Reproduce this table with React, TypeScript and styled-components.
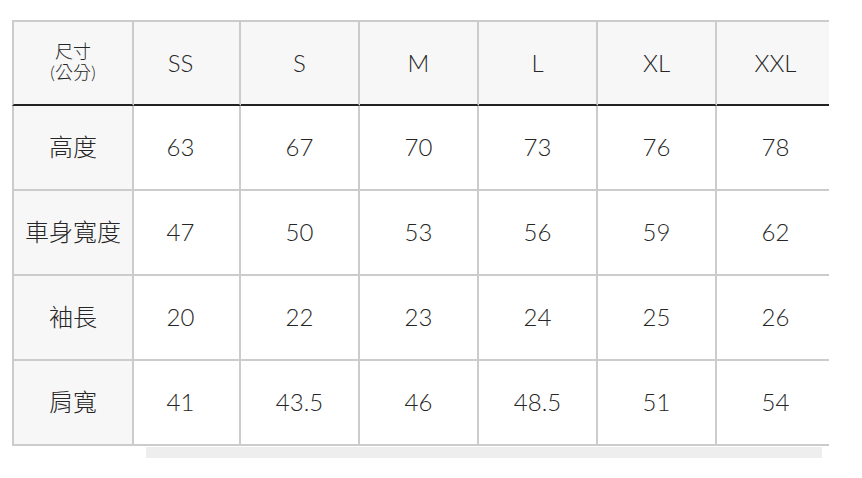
import React, { useLayoutEffect, useRef } from "react";
import styled, { createGlobalStyle } from "styled-components";

const GlobalStyle = createGlobalStyle`
  html, body { margin: 0; padding: 0; background: #ffffff; }
  body { font-family: Lato, "Noto Sans CJK TC", sans-serif; color: #333333; }
`;

const Page = styled.div`
  padding: 20px 0 0 12px;
`;

const ScrollArea = styled.div`
  width: 817px;
  overflow-x: auto;
  scrollbar-width: none;
  &::-webkit-scrollbar { display: none; }
`;

const Grid = styled.div`
  display: grid;
  grid-template-columns: 122px repeat(6, 119px);
  grid-template-rows: 86px repeat(4, 85px);
  width: 836px;
`;

const Cell = styled.div<{ $head?: boolean; $label?: boolean }>`
  box-sizing: border-box;
  display: flex;
  align-items: center;
  justify-content: center;
  text-align: center;
  font-size: 24px;
  line-height: 1.2;
  font-weight: 300;
  color: #262626;
  background: ${(p) => (p.$head || p.$label ? "#f7f7f7" : "#ffffff")};
  border-right: 2px solid #cccccc;
  border-bottom: 2px solid ${(p) => (p.$head ? "#222222" : "#cccccc")};
  border-top: ${(p) => (p.$head ? "2px solid #cccccc" : "none")};
  border-left: ${(p) => (p.$label ? "2px solid #cccccc" : "none")};
  ${(p) => (p.$label ? "position: sticky; left: 0; z-index: 1;" : "")}
`;

const UnitLabel = styled.span`
  display: flex;
  flex-direction: column;
  align-items: center;
  font-size: 18px;
  line-height: 21px;
  margin-top: -2px;
`;

const Track = styled.div`
  width: 817px;
  height: 11px;
  margin-top: 1px;
`;

const Thumb = styled.div`
  margin-left: 134px;
  width: 676px;
  height: 11px;
  background: #eeeeee;
`;

const sizes = ["SS", "S", "M", "L", "XL", "XXL"];
const rows: { label: string; values: string[] }[] = [
  { label: "高度", values: ["63", "67", "70", "73", "76", "78"] },
  { label: "車身寬度", values: ["47", "50", "53", "56", "59", "62"] },
  { label: "袖長", values: ["20", "22", "23", "24", "25", "26"] },
  { label: "肩寬", values: ["41", "43.5", "46", "48.5", "51", "54"] },
];

export default function App() {
  const ref = useRef<HTMLDivElement>(null);
  useLayoutEffect(() => {
    if (ref.current) ref.current.scrollLeft = 12;
  }, []);
  return (
    <Page>
      <GlobalStyle />
      <ScrollArea ref={ref}>
        <Grid>
          <Cell $head $label>
            <UnitLabel>
              <span>尺寸</span>
              <span>(公分)</span>
            </UnitLabel>
          </Cell>
          {sizes.map((s) => (
            <Cell key={s} $head>
              {s}
            </Cell>
          ))}
          {rows.map((r) => (
            <React.Fragment key={r.label}>
              <Cell $label>{r.label}</Cell>
              {r.values.map((v, i) => (
                <Cell key={i}>{v}</Cell>
              ))}
            </React.Fragment>
          ))}
        </Grid>
      </ScrollArea>
      <Track>
        <Thumb />
      </Track>
    </Page>
  );
}
